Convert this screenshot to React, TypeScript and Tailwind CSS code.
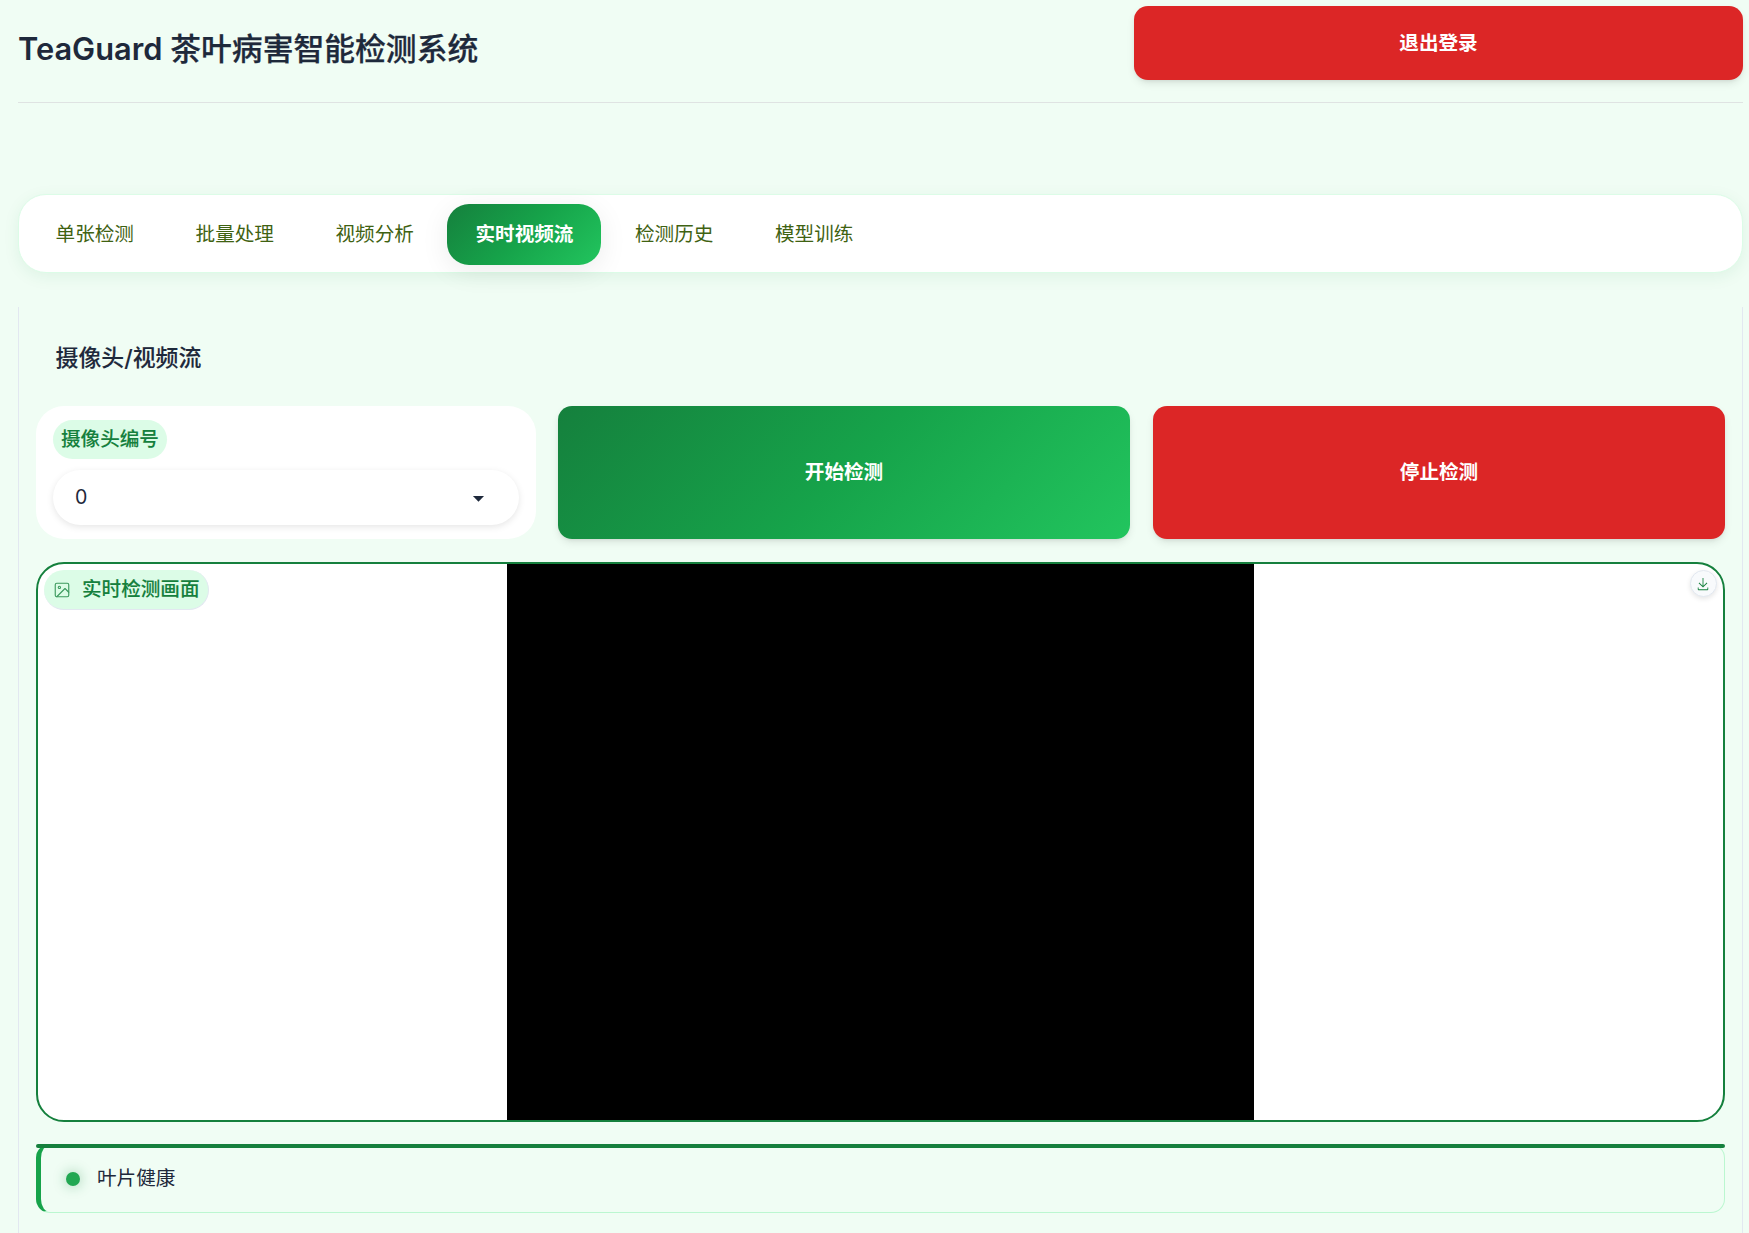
const FONT = "font-['Inter','Noto_Sans_CJK_SC',sans-serif]";

const TABS = ["单张检测", "批量处理", "视频分析", "实时视频流", "检测历史", "模型训练"];

const SOFT = "shadow-[0_4px_8px_-1px_rgba(0,0,0,0.1),0_2px_4px_-2px_rgba(0,0,0,0.1)]";

function ImageIcon() {
  return (
    <svg width="18" height="18" viewBox="0 0 24 24" fill="none" stroke="currentColor" strokeWidth="1.5" strokeLinecap="round" strokeLinejoin="round">
      <rect x="3" y="3" width="18" height="18" rx="2" />
      <circle cx="8.5" cy="8.5" r="1.5" />
      <polyline points="21 15 16 10 5 21" />
    </svg>
  );
}

function DownloadIcon() {
  return (
    <svg width="14" height="14" viewBox="0 0 32 32" fill="currentColor">
      <path d="M26 24v4H6v-4H4v4a2 2 0 0 0 2 2h20a2 2 0 0 0 2-2v-4zm0-10l-1.41-1.41L17 20.17V2h-2v18.17l-7.59-7.58L6 14l10 10l10-10z" />
    </svg>
  );
}

export default function App() {
  return (
    <div className={`h-[1233px] overflow-hidden bg-[#f0fdf4] pl-[18px] pr-[6px] pt-[6px] text-[19.6px] text-[#1e293b] ${FONT}`}>
      <header className="flex h-[97px] items-start justify-between border-b border-[#dfe3e2]">
        <h1 className="mt-[21px] text-[30.8px] font-semibold leading-[44px]">
          TeaGuard <span className="font-medium [-webkit-text-stroke:0.25px_#1e293b]">茶叶病害智能检测系统</span>
        </h1>
        <button className={`h-[74px] w-[609px] rounded-[14px] bg-[#dc2626] pt-[1px] font-semibold text-white ${SOFT}`}>退出登录</button>
      </header>

      <nav className="mt-[91px] flex h-[79px] items-start gap-[5.6px] rounded-[28px] border border-[#dcfce7] bg-white px-[8px] pt-[9px] shadow-[0_4px_16px_rgba(21,128,61,0.08)]">
        {TABS.map((t) =>
          t === "实时视频流" ? (
            <button key={t} className="h-[61px] rounded-[22px] bg-[linear-gradient(135deg,#15803d_0%,#16a34a_50%,#22c55e_100%)] pl-[28.6px] pr-[27.4px] font-semibold text-white shadow-[0_6px_28px_rgba(0,0,0,0.08)]">
              {t}
            </button>
          ) : (
            <button key={t} className="h-[61px] rounded-[22px] pl-[28.6px] pr-[27.4px] text-[#3f6212]">
              {t}
            </button>
          )
        )}
      </nav>

      <main className="mt-[34px] h-[940px] border-x border-[#e2e8f0] px-[17px] pt-[34px]">
        <h2 className="ml-[19.5px] text-[22.9px] font-medium leading-[34px] [-webkit-text-stroke:0.1px_#1e293b]">摄像头/视频流</h2>

        <div className="mt-[31px] flex h-[133px] gap-[23px]">
          <div className="-mr-px w-[500px] shrink-0 rounded-[28px] bg-white px-[17px] pt-[14px]">
            <div className="flex h-[39px] w-fit items-center rounded-[20px] bg-[#dcfce7] px-[8px] font-medium text-[#15803d] [-webkit-text-stroke:0.1px_#15803d]">摄像头编号</div>
            <div className="mt-[11px] flex h-[55px] items-center justify-between rounded-[28px] bg-white pl-[22px] pr-[28px] shadow-[0_2px_7px_rgba(0,0,0,0.1)]">
              <span>0</span>
              <svg width="25" height="25" viewBox="0 0 18 18" fill="currentColor">
                <path d="M5 8l4 4 4-4z" />
              </svg>
            </div>
          </div>
          <button className={`flex-1 rounded-[14px] bg-[linear-gradient(135deg,#15803d_0%,#16a34a_50%,#22c55e_100%)] font-semibold text-white ${SOFT}`}>开始检测</button>
          <button className={`flex-1 rounded-[14px] bg-[#dc2626] font-semibold text-white ${SOFT}`}>停止检测</button>
        </div>

        <section className="relative mt-[23px] flex h-[560px] justify-center overflow-hidden rounded-[28px] border-2 border-[#15803d] bg-white">
          <div className="h-full w-[747px] bg-black" />
          <div className="absolute left-[6px] top-[6px] flex h-[40px] items-center rounded-[20px] border-b border-r border-[#e2e8f0] bg-[#dcfce7] pl-[9px] pr-[8px] font-medium text-[#15803d] [-webkit-text-stroke:0.1px_#15803d]">
            <span className="mr-[11px] opacity-80"><ImageIcon /></span>
            实时检测画面
          </div>
          <div className="absolute right-[6px] top-[6px] flex h-[27px] w-[27px] items-center justify-center rounded-full border border-[#e2e8f0] bg-[#f8fafc] pr-[1px] text-[#15803d] shadow-[0_2px_5px_rgba(0,0,0,0.1)]">
            <DownloadIcon />
          </div>
        </section>

        <section className="relative mt-[22px] flex h-[69px] items-center rounded-[14px] border border-l-[5px] border-[#bbf7d0] border-l-[#16a34a] pl-[25px]">
          <div className="absolute -left-[5px] -right-px -top-px h-[4px] rounded-[2px] bg-[#15803d]" />
          <span className="h-[14px] w-[14px] rounded-full bg-[#22a752] shadow-[0_0_13px_rgba(21,128,61,0.4)]" />
          <span className="ml-[17px]">叶片健康</span>
        </section>
      </main>
    </div>
  );
}
